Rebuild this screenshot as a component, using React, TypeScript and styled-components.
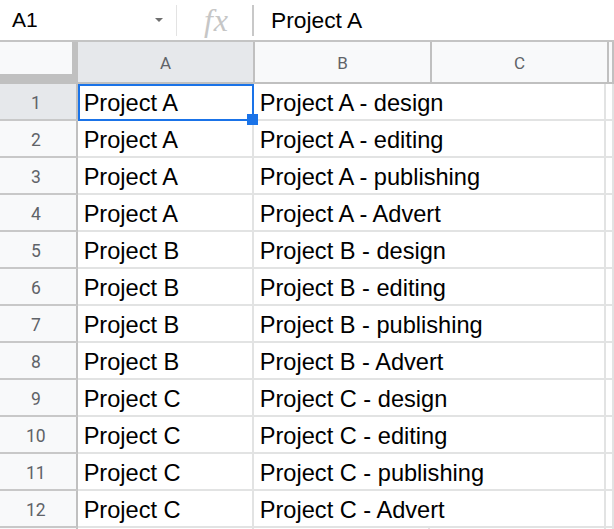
import React from 'react';
import styled, { createGlobalStyle } from 'styled-components';

const GlobalStyle = createGlobalStyle`
  html, body {
    margin: 0;
    padding: 0;
    background: #fff;
    overflow: hidden;
  }
  * {
    box-sizing: border-box;
  }
`;

// top formula bar
const FormulaBar = styled.div`
  display: flex;
  align-items: center;
  height: 42px;
  border-bottom: 2px solid #c4c4c4;
  font-family: 'Liberation Sans', Arial, sans-serif;
  color: #000;
`;

const NameBox = styled.div`
  display: flex;
  align-items: center;
  width: 176px;
  height: 100%;
  padding-left: 12px;
  font-size: 21px;
`;

const NameText = styled.span`
  flex: 1;
`;

const Caret = styled.span`
  width: 0;
  height: 0;
  margin-right: 13px;
  border-left: 4px solid transparent;
  border-right: 4px solid transparent;
  border-top: 4px solid #6f6f6f;
`;

const Divider = styled.div<{ $dark?: boolean }>`
  width: ${(p) => (p.$dark ? 2 : 1)}px;
  height: 31px;
  background: ${(p) => (p.$dark ? '#c8c8c8' : '#e3e3e3')};
`;

const FxIcon = styled.div`
  width: 75px;
  padding-left: 4px;
  text-align: center;
  font-family: 'Liberation Serif', 'Times New Roman', serif;
  font-style: italic;
  font-size: 32px;
  line-height: 1;
  color: #c6c6c6;
  letter-spacing: 1px;
`;

const FormulaText = styled.div`
  padding-left: 17px;
  font-size: 22.8px;
`;

// sheet grid
const Sheet = styled.div`
  display: flex;
  flex-direction: column;
`;

const Row = styled.div<{ $height: number }>`
  display: flex;
  height: ${(p) => p.$height}px;
`;

const Corner = styled.div`
  width: 78px;
  height: 100%;
  background: #f8f9fa;
  border-right: 6px solid #c0c0c0;
  border-bottom: 10px solid #c0c0c0;
`;

const ColHeader = styled.div<{ $width?: number; $active?: boolean }>`
  ${(p) => (p.$width ? `width: ${p.$width}px;` : 'flex: 1;')}
  height: 100%;
  display: flex;
  align-items: center;
  justify-content: center;
  padding-top: 2px;
  background: ${(p) => (p.$active ? '#e6e8eb' : '#f8f9fa')};
  border-right: 2px solid #c0c0c0;
  border-bottom: 2px solid #c0c0c0;
  font-family: Roboto, 'Liberation Sans', sans-serif;
  font-size: 17px;
  color: #5f6368;
`;

const RowHeader = styled.div<{ $active?: boolean }>`
  width: 78px;
  height: 100%;
  display: flex;
  align-items: center;
  justify-content: center;
  padding: 2px 4px 0 0;
  background: ${(p) => (p.$active ? '#e6e8eb' : '#f8f9fa')};
  border-right: 2px solid #c0c0c0;
  border-bottom: 2px solid #c8c8c8;
  font-family: Roboto, 'Liberation Sans', sans-serif;
  font-size: 17.5px;
  color: #5f6368;
`;

const Cell = styled.div<{ $width?: number }>`
  position: relative;
  ${(p) => (p.$width ? `width: ${p.$width}px;` : 'flex: 1;')}
  height: 100%;
  display: flex;
  align-items: center;
  padding: 4px 0 0 6px;
  white-space: nowrap;
  border-right: 2px solid #e2e3e3;
  border-bottom: 2px solid #e2e3e3;
  font-family: 'Liberation Sans', Arial, sans-serif;
  font-size: 23.6px;
  color: #000;
`;

const Selection = styled.div`
  position: absolute;
  z-index: 2;
  top: 0;
  left: 0;
  right: -2px;
  bottom: -2px;
  border: 2px solid #1a73e8;
  pointer-events: none;
`;

const Handle = styled.div`
  position: absolute;
  right: -6px;
  bottom: -6px;
  width: 11px;
  height: 11px;
  background: #1a73e8;
`;

const rows: [string, string][] = [
  ['Project A', 'Project A - design'],
  ['Project A', 'Project A - editing'],
  ['Project A', 'Project A - publishing'],
  ['Project A', 'Project A - Advert'],
  ['Project B', 'Project B - design'],
  ['Project B', 'Project B - editing'],
  ['Project B', 'Project B - publishing'],
  ['Project B', 'Project B - Advert'],
  ['Project C', 'Project C - design'],
  ['Project C', 'Project C - editing'],
  ['Project C', 'Project C - publishing'],
  ['Project C', 'Project C - Advert'],
];

export default function App() {
  return (
    <>
      <GlobalStyle />
      <FormulaBar>
        <NameBox>
          <NameText>A1</NameText>
          <Caret />
        </NameBox>
        <Divider />
        <FxIcon>fx</FxIcon>
        <Divider $dark />
        <FormulaText>Project A</FormulaText>
      </FormulaBar>

      <Sheet>
        <Row $height={42}>
          <Corner />
          <ColHeader $width={177} $active>A</ColHeader>
          <ColHeader $width={177}>B</ColHeader>
          <ColHeader $width={177}>C</ColHeader>
          <ColHeader />
        </Row>

        {rows.map(([a, b], i) => (
          <Row $height={37} key={i}>
            <RowHeader $active={i === 0}>{i + 1}</RowHeader>
            <Cell $width={177}>
              {a}
              {i === 0 && (
                <Selection>
                  <Handle />
                </Selection>
              )}
            </Cell>
            <Cell $width={354}>{b}</Cell>
            <Cell />
          </Row>
        ))}

        {/* row 13, only its top edge is in view */}
        <Row $height={37}>
          <RowHeader />
          <Cell $width={177} />
          <Cell $width={177} />
          <Cell $width={177} />
          <Cell />
        </Row>
      </Sheet>
    </>
  );
}
